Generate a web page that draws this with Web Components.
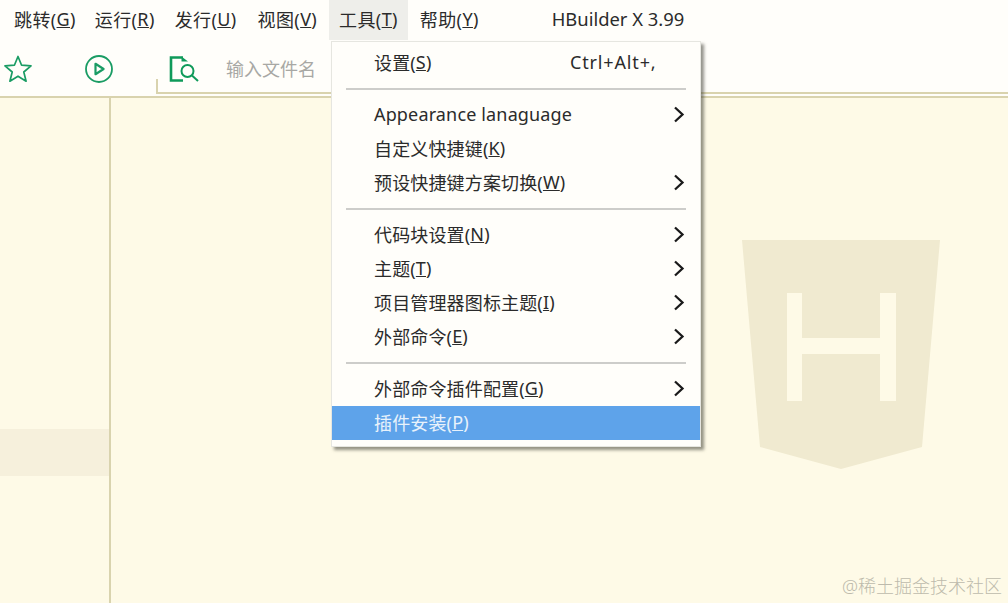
<!DOCTYPE html>
<html lang="zh">
<head>
<meta charset="utf-8">
<title>HBuilder X</title>
<style>
    html, body { margin: 0; height: 100%; overflow: hidden; }
    body { font-family: "Noto Sans", "Noto Sans CJK SC", sans-serif; color: #2b2b2b; }
</style>
</head>
<body>
<hx-app>
    <hx-menubar slot="top">
        <hx-top-item>跳转(<u>G</u>)</hx-top-item>
        <hx-top-item style="margin-left: -1px">运行(<u>R</u>)</hx-top-item>
        <hx-top-item>发行(<u>U</u>)</hx-top-item>
        <hx-top-item style="margin-left: 1px">视图(<u>V</u>)</hx-top-item>
        <hx-top-item active style="margin-left: 2px">工具(<u>T</u>)</hx-top-item>
        <hx-top-item style="margin-left: 2px">帮助(<u>Y</u>)</hx-top-item>
        <span slot="title">HBuilder X 3.99</span>
    </hx-menubar>
    <hx-toolbar slot="top"></hx-toolbar>
    <hx-sidebar slot="left"></hx-sidebar>
    <hx-editor slot="main"></hx-editor>
    <hx-menu slot="overlay">
        <hx-menu-item>设置(<u>S</u>)<span slot="shortcut">Ctrl+Alt+,</span></hx-menu-item>
        <hx-menu-sep></hx-menu-sep>
        <hx-menu-item arrow>Appearance lanaguage</hx-menu-item>
        <hx-menu-item>自定义快捷键(<u>K</u>)</hx-menu-item>
        <hx-menu-item arrow>预设快捷键方案切换(<u>W</u>)</hx-menu-item>
        <hx-menu-sep></hx-menu-sep>
        <hx-menu-item arrow>代码块设置(<u>N</u>)</hx-menu-item>
        <hx-menu-item arrow>主题(<u>T</u>)</hx-menu-item>
        <hx-menu-item arrow>项目管理器图标主题(<u>I</u>)</hx-menu-item>
        <hx-menu-item arrow>外部命令(<u>E</u>)</hx-menu-item>
        <hx-menu-sep></hx-menu-sep>
        <hx-menu-item arrow>外部命令插件配置(<u>G</u>)</hx-menu-item>
        <hx-menu-item selected>插件安装(<u>P</u>)</hx-menu-item>
    </hx-menu>
</hx-app>

<script>
class Base extends HTMLElement {
    constructor() {
        super();
        this.attachShadow({ mode: 'open' });
        this.shadowRoot.innerHTML = this.markup();
    }
}

class HxApp extends Base {
    markup() {
        return `
            <style>
                :host { display: flex; flex-direction: column; width: 1008px; height: 603px; position: relative; overflow: hidden; background: #fefae7; }
                .body { flex: 1; display: flex; min-height: 0; }
            </style>
            <slot name="top"></slot>
            <div class="body">
                <slot name="left"></slot>
                <slot name="main"></slot>
            </div>
            <slot name="overlay"></slot>
        `;
    }
}

class HxMenubar extends Base {
    markup() {
        return `
            <style>
                :host { display: flex; height: 40px; padding-left: 4px; background: #fffefa; align-items: stretch; }
                .title { margin-left: 63px; font-size: 18.4px; line-height: 38px; }
            </style>
            <slot></slot>
            <div class="title"><slot name="title"></slot></div>
        `;
    }
}

class HxTopItem extends Base {
    markup() {
        return `
            <style>
                :host { display: flex; align-items: center; box-sizing: border-box; padding: 0 10px 2px; font-size: 18px; letter-spacing: .38px; white-space: nowrap; }
                :host([active]) { background: #eeeeea; }
            </style>
            <slot></slot>
        `;
    }
}

class HxToolbar extends Base {
    markup() {
        return `
            <style>
                :host { display: flex; height: 56px; box-sizing: content-box; background: #fffefa; border-bottom: 2px solid #d9d3ae; }
                .star { margin: 15px 0 0 4px; }
                .play { margin: 15px 0 0 53px; }
                .search { flex: 1; margin: 39px 0 2px 43px; display: flex; align-items: flex-end; border-left: 2px solid #d9d3ae; border-bottom: 2px solid #d9d3ae; position: relative; }
                .doc { position: absolute; left: 11px; top: -23px; }
                .hint { position: absolute; left: 68px; top: -23px; font-size: 18px; line-height: 26px; color: #a8a8a4; }
            </style>
            <svg class="star" width="28" height="28" viewBox="0 0 28 28" fill="none" stroke="#1a9c64" stroke-width="1.7" stroke-linejoin="round">
                <path d="M14 1.5 17.6 10.2 27 10.9 19.8 17 22.1 26.2 14 21.2 5.9 26.2 8.2 17 1 10.9 10.4 10.2Z"/>
            </svg>
            <svg class="play" width="28" height="28" viewBox="0 0 28 28" fill="none" stroke="#1a9c64" stroke-width="1.8">
                <circle cx="14" cy="14" r="13"/>
                <path d="M10.5 8.8 18.6 14 10.5 19.2Z" stroke-width="2.2" stroke-linejoin="round"/>
            </svg>
            <div class="search">
                <svg class="doc" width="30" height="27" viewBox="0 0 30 27" fill="none" stroke="#0f9a5a">
                    <path d="M14 1.5H2V24.5H14" stroke-width="2.6"/>
                    <path d="M12.5 0.5 19 5.5H12.5Z" fill="#0f9a5a" stroke="none"/>
                    <circle cx="18.5" cy="15" r="6" stroke-width="2"/>
                    <path d="M23 19.5 29 25" stroke-width="2"/>
                </svg>
                <span class="hint">输入文件名</span>
            </div>
        `;
    }
}

class HxSidebar extends Base {
    markup() {
        return `
            <style>
                :host { display: block; width: 109px; border-right: 2px solid #d9d3ae; padding-top: 331px; box-sizing: content-box; }
                .row { height: 47px; background: #f6f0dc; }
            </style>
            <div class="row"></div>
        `;
    }
}

class HxEditor extends Base {
    markup() {
        return `
            <style>
                :host { display: flex; flex: 1; justify-content: flex-end; align-items: flex-start; padding: 142px 68px 0 0; position: relative; }
                .mark { position: absolute; right: 6px; bottom: 7px; font-size: 18px; line-height: 20px; font-weight: 300; color: #bdbaac; white-space: nowrap; }
            </style>
            <svg width="198" height="230" viewBox="0 0 198 230">
                <path fill="#f0ead0" d="M0 0H198L180 207 99 229 18 207Z"/>
                <path fill="#fefae7" d="M45 53H60V98H138V53H154V161H138V114H60V161H45Z"/>
            </svg>
            <span class="mark">@稀土掘金技术社区</span>
        `;
    }
}

class HxMenu extends Base {
    markup() {
        return `
            <style>
                :host { display: block; position: absolute; left: 331px; top: 41px; width: 368px; padding: 4px 0 6px; background: #fffefa; border: 1px solid #e6e6e0; box-shadow: 3px 3px 3px rgba(60, 60, 50, .55); }
            </style>
            <slot></slot>
        `;
    }
}

class HxMenuSep extends Base {
    markup() {
        return `
            <style>
                :host { display: block; height: 18px; padding: 8px 14px; box-sizing: border-box; }
                div { height: 2px; background: #cdcdca; }
            </style>
            <div></div>
        `;
    }
}

class HxMenuItem extends Base {
    markup() {
        return `
            <style>
                :host { display: flex; align-items: center; box-sizing: border-box; height: 34px; padding: 0 0 2px 42px; font-size: 18px; letter-spacing: .15px; white-space: nowrap; position: relative; }
                :host([selected]) { background: #5ea3ea; color: #e8f2fb; }
                .shortcut { position: absolute; left: 238px; letter-spacing: .85px; }
                svg { position: absolute; right: 15px; display: none; }
                :host([arrow]) svg { display: block; }
            </style>
            <slot></slot>
            <span class="shortcut"><slot name="shortcut"></slot></span>
            <svg width="12" height="17" viewBox="0 0 12 17" fill="none" stroke="#1a1a1a" stroke-width="2.3">
                <path d="M2 1.5 9.5 8.5 2 15.5"/>
            </svg>
        `;
    }
}

customElements.define('hx-app', HxApp);
customElements.define('hx-menubar', HxMenubar);
customElements.define('hx-top-item', HxTopItem);
customElements.define('hx-toolbar', HxToolbar);
customElements.define('hx-sidebar', HxSidebar);
customElements.define('hx-editor', HxEditor);
customElements.define('hx-menu', HxMenu);
customElements.define('hx-menu-sep', HxMenuSep);
customElements.define('hx-menu-item', HxMenuItem);
</script>
</body>
</html>
